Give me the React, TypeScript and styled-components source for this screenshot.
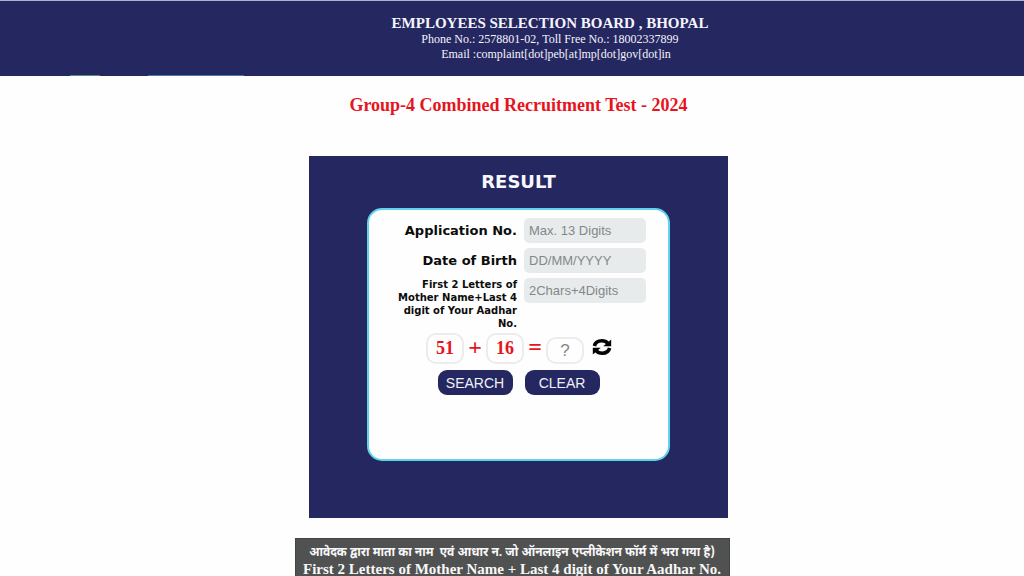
import React, { useState } from "react";
import styled, { createGlobalStyle } from "styled-components";

const navy = "#252761";

const GlobalStyle = createGlobalStyle`
  * { box-sizing: border-box; }
  body {
    margin: 0;
    background: #fefefe;
    font-family: "Liberation Serif", "Times New Roman", serif;
    overflow-x: hidden;
  }
`;

const Header = styled.header`
  border-top: 1px solid #a9b3d3;
  background:
    linear-gradient(#5c8a78, #5c8a78) 70px 100% / 30px 1px no-repeat,
    linear-gradient(#3f7fa8, #3f7fa8) 148px 100% / 96px 1px no-repeat,
    ${navy};
  color: #f4f4fa;
  min-height: 76px;
  padding: 14px 0 14px 76px;
  text-align: center;
`;

const BoardName = styled.h1`
  margin: 0;
  font-size: 15px;
  line-height: 17px;
`;

const ContactLine = styled.p`
  margin: 0;
  font-size: 12px;
  line-height: 15px;
`;

const Email = styled(ContactLine)`
  padding-left: 12px;
`;

const Main = styled.main`
  display: flex;
  flex-direction: column;
  align-items: center;
  padding: 19px 0 0 13px;
`;

const ExamTitle = styled.h2`
  margin: 0 0 41px;
  color: #e5141d;
  font-size: 18px;
  line-height: 20px;
  text-align: center;
`;

const Panel = styled.section`
  width: 100%;
  max-width: 419px;
  padding: 16px 58px 57px;
  background: ${navy};
`;

const PanelTitle = styled.h3`
  margin: 0 0 16px;
  color: #f8f8fc;
  font: bold 18px/20px "DejaVu Sans", Verdana, sans-serif;
  text-align: center;
`;

const Card = styled.form`
  min-height: 253px;
  padding: 8px 20px;
  background: #fefefe;
  border: 2px solid #5fd3ea;
  border-radius: 15px;
`;

const Field = styled.div`
  display: grid;
  grid-template-columns: 128px 122px;
  column-gap: 7px;
  align-items: start;
  margin-bottom: 5px;
`;

const Label = styled.label<{ $small?: boolean }>`
  color: #0c0c0c;
  font-family: "DejaVu Sans", Verdana, sans-serif;
  font-weight: bold;
  font-size: ${(p) => (p.$small ? "10px" : "13px")};
  line-height: ${(p) => (p.$small ? "13px" : "25px")};
  text-align: right;
`;

const TextInput = styled.input`
  width: 100%;
  height: 25px;
  padding: 0 5px;
  border: 0;
  border-radius: 5px;
  background: #e8ebec;
  color: #333;
  font: 13px "Liberation Sans", Arial, sans-serif;
  &::placeholder { color: #858789; opacity: 1; }
`;

const Captcha = styled.div`
  display: flex;
  align-items: center;
  gap: 5px;
  height: 31px;
  margin: -2px 0 6px 37px;
`;

const Operand = styled.output`
  width: 38px;
  height: 31px;
  border: 2px solid #ececee;
  border-radius: 10px;
  color: #e5141d;
  font-size: 18px;
  font-weight: bold;
  line-height: 27px;
  text-align: center;
`;

const Operator = styled.span`
  width: 12px;
  padding-bottom: 4px;
  color: #e5141d;
  font-size: 24px;
  font-weight: bold;
  line-height: 24px;
  display: flex;
  justify-content: center;
`;

const Answer = styled.input`
  width: 38px;
  height: 27px;
  padding: 0;
  align-self: flex-end;
  border: 2px solid #ececee;
  border-radius: 10px;
  background: transparent;
  font: 17px "Liberation Sans", Arial, sans-serif;
  text-align: center;
  &::placeholder { color: #858789; opacity: 1; }
`;

const Refresh = styled.button`
  display: flex;
  padding: 0 0 4px;
  margin-left: 3px;
  border: 0;
  background: none;
  color: #050505;
  cursor: pointer;
`;

const Actions = styled.div`
  display: flex;
  justify-content: center;
  gap: 12px;
`;

const ActionButton = styled.button`
  width: 75px;
  height: 25px;
  padding: 0;
  border: 0;
  border-radius: 9px;
  background: ${navy};
  color: #f1f1f8;
  font: 14px "Liberation Sans", Arial, sans-serif;
  cursor: pointer;
`;

const Footer = styled.footer`
  width: 100%;
  max-width: 435px;
  margin: 20px auto 0;
  padding: 6px 0;
  background: #505151;
  border: 1px solid #444;
  color: #f8f8f8;
  font-size: 15px;
  font-weight: bold;
  line-height: 16px;
  text-align: center;
  white-space: nowrap;
`;

const NoteLine = styled.p`
  margin: 0;
`;

const HindiLine = styled(NoteLine)`
  font-family: "Noto Sans Devanagari", "Noto Sans", sans-serif;
  font-size: 12px;
  white-space: pre;
`;

const RefreshIcon = () => (
  <svg width="20" height="18" viewBox="0 0 20 18" fill="none" aria-hidden="true">
    <path d="M2.4 8C3.2 4.5 6.2 2.8 9.8 2.8c2.7 0 4.7.9 6 2.6" stroke="currentColor" strokeWidth="3.6" />
    <path d="M19.2 1.4V8.2h-8z" fill="currentColor" />
    <path d="M17.6 10c-.8 3.5-3.8 5.2-7.4 5.2-2.7 0-4.7-.9-6-2.6" stroke="currentColor" strokeWidth="3.6" />
    <path d="M.8 16.6V9.8h8z" fill="currentColor" />
  </svg>
);

export default function App() {
  const [values, setValues] = useState({ application: "", birth: "", code: "", answer: "" });
  const bind = (name: keyof typeof values) => ({
    id: name,
    value: values[name],
    onChange: (e: React.ChangeEvent<HTMLInputElement>) =>
      setValues({ ...values, [name]: e.target.value }),
  });
  const clear = () => setValues({ application: "", birth: "", code: "", answer: "" });

  return (
    <>
      <GlobalStyle />
      <Header>
        <BoardName>EMPLOYEES SELECTION BOARD , BHOPAL</BoardName>
        <ContactLine>Phone No.: 2578801-02, Toll Free No.: 18002337899</ContactLine>
        <Email>Email :complaint[dot]peb[at]mp[dot]gov[dot]in</Email>
      </Header>
      <Main>
        <ExamTitle>Group-4 Combined Recruitment Test - 2024</ExamTitle>
        <Panel>
          <PanelTitle>RESULT</PanelTitle>
          <Card onSubmit={(e) => e.preventDefault()}>
            <Field>
              <Label htmlFor="application">Application No.</Label>
              <TextInput {...bind("application")} maxLength={13} placeholder="Max. 13 Digits" />
            </Field>
            <Field>
              <Label htmlFor="birth">Date of Birth</Label>
              <TextInput {...bind("birth")} placeholder="DD/MM/YYYY" />
            </Field>
            <Field>
              <Label htmlFor="code" $small>
                First 2 Letters of Mother Name+Last 4 digit of Your Aadhar No.
              </Label>
              <TextInput {...bind("code")} maxLength={6} placeholder="2Chars+4Digits" />
            </Field>
            <Captcha>
              <Operand>51</Operand>
              <Operator>+</Operator>
              <Operand>16</Operand>
              <Operator>=</Operator>
              <Answer {...bind("answer")} aria-label="Sum" placeholder="?" />
              <Refresh type="button" aria-label="Refresh">
                <RefreshIcon />
              </Refresh>
            </Captcha>
            <Actions>
              <ActionButton type="submit">SEARCH</ActionButton>
              <ActionButton type="button" onClick={clear}>CLEAR</ActionButton>
            </Actions>
          </Card>
        </Panel>
      </Main>
      <Footer>
        <HindiLine lang="hi">आवेदक द्वारा माता का नाम  एवं आधार न. जो ऑनलाइन एप्लीकेशन फॉर्म में भरा गया है)</HindiLine>
        <NoteLine>First 2 Letters of Mother Name + Last 4 digit of Your Aadhar No.</NoteLine>
      </Footer>
    </>
  );
}
